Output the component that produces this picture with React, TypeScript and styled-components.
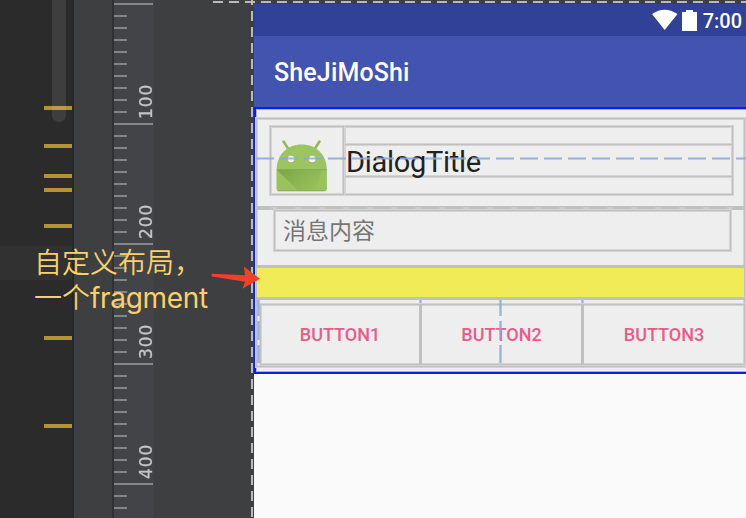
import React from "react";
import styled, { createGlobalStyle, css } from "styled-components";

const LINE = "#c0c0c0";
const SOFT = "#d4d4d4";
const GUIDE = "#8aabd8";

const GlobalStyle = createGlobalStyle`
  html, body { margin: 0; padding: 0; }
  body { width: 746px; height: 518px; overflow: hidden; background: #3e3f41; }
  * { box-sizing: border-box; }
`;

const Screen = styled.main`
  position: relative;
  display: flex;
  width: 746px;
  height: 518px;
  overflow: hidden;
  background: #3e3f41;
  font-family: Roboto, "Noto Sans CJK SC", sans-serif;
`;

const CodeStrip = styled.div`
  position: relative;
  flex: none;
  width: 74px;
  background: #2b2b2b;
  border-right: 2px solid #272727;
`;

const CurrentLine = styled.div`
  position: absolute;
  top: 246px;
  left: 0;
  right: 0;
  height: 34px;
  background: #313131;
`;

const ChangeMark = styled.div<{ $top: number }>`
  position: absolute;
  left: 44px;
  top: ${(p) => p.$top}px;
  width: 28px;
  height: 4px;
  background: #b69136;
`;

const ScrollThumb = styled.div`
  position: absolute;
  left: 52px;
  top: 0;
  width: 14px;
  height: 122px;
  border-radius: 0 0 7px 7px;
  background: rgba(255, 255, 255, 0.09);
`;

const Gutter = styled.div`
  flex: none;
  width: 40px;
  background: #3e3f41;
  border-right: 2px solid #323233;
`;

const Ruler = styled.div`
  flex: none;
  display: flex;
  flex-direction: column;
  gap: 10px;
  width: 40px;
  padding-top: 3px;
  background: #434447;
`;

const Tick = styled.div<{ $major: boolean }>`
  position: relative;
  flex: none;
  width: ${(p) => (p.$major ? 39 : 13)}px;
  height: 2px;
  background: #848584;
`;

const TickLabel = styled.span`
  position: absolute;
  left: 22px;
  bottom: 6px;
  height: 36px;
  width: 20px;
  writing-mode: vertical-rl;
  transform: rotate(180deg);
  font: 17px/20px "DejaVu Sans", sans-serif;
  letter-spacing: 0.9px;
  color: #c4c4c4;
  -webkit-text-stroke: 0.3px #c4c4c4;
`;

const Canvas = styled.div`
  flex: none;
  width: 100px;
  background: #3e3f40;
`;

const dashes = (dir: string) =>
  css`repeating-linear-gradient(${dir}, #bababa 0 10px, transparent 10px 16px)`;

const TopDashes = styled.div`
  position: absolute;
  left: 213px;
  right: 0;
  top: 1px;
  height: 2px;
  background: ${dashes("to right")};
`;

const SideDashes = styled.div`
  position: absolute;
  left: 251px;
  top: -5px;
  bottom: 0;
  width: 2px;
  background: ${dashes("to bottom")};
`;

const Device = styled.section`
  flex: none;
  width: 492px;
  margin-top: 4px;
  background: #fafafa;
`;

const StatusBar = styled.header`
  display: flex;
  align-items: flex-start;
  justify-content: flex-end;
  height: 32px;
  padding-right: 4px;
  background: #314198;
  color: #fff;
`;

const StatusIcons = styled.svg`
  width: 46px;
  height: 22px;
  margin: 5px 5px 0 0;
`;

const Clock = styled.span`
  font-size: 20px;
  line-height: 35px;
  font-weight: 500;
`;

const AppBar = styled.div`
  display: flex;
  align-items: center;
  height: 71px;
  padding: 2px 0 0 20px;
  background: #4253b0;
  color: #fff;
  font-size: 25px;
  font-weight: 500;
  letter-spacing: 0.15px;
`;

const Dialog = styled.article`
  position: relative;
  width: 500px;
  height: 267px;
  padding-top: 9px;
  border: 2px solid #0a1ef0;
  box-shadow: inset 0 0 0 1px #a9aef2;
  background: #eeeeee;
`;

const frame = css`
  border: 1px solid ${LINE};
  box-shadow: 0 0 0 1px ${SOFT}, inset 0 0 0 1px ${SOFT};
`;

const Outline = styled.div`
  ${frame}
  width: 489px;
  height: 249px;
`;

const Header = styled.div`
  display: flex;
  height: 87px;
  padding: 7px 0 0 13px;
`;

const IconCell = styled.div`
  ${frame}
  width: 75px;
  height: 69px;
  border-right-width: 2px;
`;

const TitleCell = styled.div`
  ${frame}
  width: 388px;
  height: 69px;
  padding-top: 17px;
  border-left: 0;
`;

const Title = styled.div`
  width: 387px;
  height: 33px;
  padding-left: 1px;
  border-top: 1px solid ${LINE};
  border-bottom: 1px solid ${LINE};
  box-shadow: 0 1px ${SOFT}, 0 -1px ${SOFT}, inset 0 1px ${SOFT}, inset 0 -1px ${SOFT};
  font-size: 29px;
  line-height: 35px;
  letter-spacing: -0.3px;
  color: #212121;
`;

const Divider = styled.div<{ $size: number }>`
  height: ${(p) => p.$size}px;
  background: ${LINE};
`;

const MessageArea = styled.div`
  height: 55px;
  padding-left: 17px;
`;

const Message = styled.div`
  ${frame}
  width: 457px;
  height: 41px;
  padding-left: 8px;
  font: 23px/37px "Noto Sans CJK SC", sans-serif;
  color: #757575;
`;

const FragmentSlot = styled.div`
  height: 29px;
  background: #f0eb56;
`;

const ButtonRow = styled.div`
  ${frame}
  display: flex;
  width: 485px;
  height: 61px;
  margin: 4px 0 0 3px;
`;

const DialogButton = styled.button<{ $width: number; $last?: boolean }>`
  flex: none;
  width: ${(p) => p.$width}px;
  height: 59px;
  padding: 0;
  border: 0;
  border-right: ${(p) => (p.$last ? 0 : 3)}px solid ${LINE};
  background: none;
  color: #ec5a8a;
  font: 500 18px/59px Roboto, sans-serif;
`;

const CenterGuide = styled.div`
  position: absolute;
  left: 0;
  top: 48px;
  width: 490px;
  height: 3px;
  opacity: 0.85;
  background: linear-gradient(rgba(138, 171, 216, 0), ${GUIDE} 30% 70%, rgba(138, 171, 216, 0));
  mask: repeating-linear-gradient(to right, #000 0 18px, transparent 18px 24px);
`;

const ColumnGuide = styled.div<{ $left: number; $height?: number }>`
  position: absolute;
  left: ${(p) => p.$left}px;
  top: 191px;
  width: 3px;
  height: ${(p) => p.$height ?? 63}px;
  opacity: 0.85;
  background: linear-gradient(to right, rgba(138, 171, 216, 0.3), ${GUIDE} 30% 70%, rgba(138, 171, 216, 0.3));
  mask: repeating-linear-gradient(to bottom, #000 0 16px, transparent 16px 21px, #000 21px 24px);
`;

const DividerDashes = styled.div`
  position: absolute;
  left: 15px;
  top: 98px;
  width: 474px;
  height: 2px;
  background: repeating-linear-gradient(to right, #cccbc9 0 6px, transparent 6px 24px);
`;

const RobotIcon = styled.svg`
  display: block;
  width: 52px;
  height: 54px;
  margin: 12px 0 0 5px;
`;

const Note = styled.p`
  position: absolute;
  left: 34px;
  top: 246px;
  margin: 0;
  font: 350 28px/35px Roboto, "Noto Sans CJK SC", sans-serif;
  color: #fad06a;
  white-space: nowrap;
`;

const Latin = styled.span`
  font: 400 28px/35px Inter, sans-serif;
  letter-spacing: -0.3px;
`;

const Arrow = styled.svg`
  position: absolute;
  left: 210px;
  top: 264px;
  width: 52px;
  height: 28px;
`;

const CHANGE_MARKS = [106, 144, 174, 188, 224, 336, 424];
const TICKS = Array.from({ length: 43 }, (_, i) => i);

function Robot() {
  return (
    <RobotIcon viewBox="276 139 52 54">
      <defs>
        <linearGradient id="fold" x1="0" y1="0" x2="1" y2="0.6">
          <stop offset="0" stopColor="#7da546" />
          <stop offset="1" stopColor="#97c05c" />
        </linearGradient>
      </defs>
      <path d="M283.500 141.500l5.500 8.500M319.500 141.500l-5.500 8.500" stroke="#92ba5b" strokeWidth="2.6" strokeLinecap="round" />
      <path d="M276.700 170v-1c0-14 10.500-24.500 25-24.500s25 10.500 25 24.500v20q0 2-2 2h-46q-2 0-2-2z" fill="#9cc562" />
      <path d="M276.700 169.500h50v19.500q0 2-2 2h-46q-2 0-2-2z" fill="#99c25e" />
      <path d="M277 170l21 20.500h18l6-20.500z" fill="url(#fold)" />
      <path d="M276.700 169.600h50" stroke="#84ac52" />
      <path d="M278 190.800h47.400" stroke="#86ae54" />
      <circle cx="291" cy="159" r="3.200" fill="#fff" />
      <circle cx="312.200" cy="159" r="3.200" fill="#fff" />
    </RobotIcon>
  );
}

export default function App() {
  return (
    <Screen>
      <GlobalStyle />
      <CodeStrip>
        <CurrentLine />
        {CHANGE_MARKS.map((top) => (
          <ChangeMark key={top} $top={top} />
        ))}
        <ScrollThumb />
      </CodeStrip>
      <Gutter />
      <Ruler>
        {TICKS.map((i) => (
          <Tick key={i} $major={i % 10 === 0}>
            {i > 0 && i % 10 === 0 && <TickLabel>{i * 10}</TickLabel>}
          </Tick>
        ))}
      </Ruler>
      <Canvas />
      <Device>
        <StatusBar>
          <StatusIcons viewBox="650 9 46 22">
            <path d="M650 14q12.500-8.500 25.500 0L662.700 30z" fill="#fff" />
            <path d="M684 10h7v2h4v19h-15V12h4z" fill="#fff" />
          </StatusIcons>
          <Clock>7:00</Clock>
        </StatusBar>
        <AppBar>SheJiMoShi</AppBar>
        <Dialog>
          <Outline>
            <Header>
              <IconCell>
                <Robot />
              </IconCell>
              <TitleCell>
                <Title>DialogTitle</Title>
              </TitleCell>
            </Header>
            <Divider $size={4} />
            <MessageArea>
              <Message>消息内容</Message>
            </MessageArea>
            <Divider $size={3} />
            <FragmentSlot />
            <Divider $size={3} />
            <ButtonRow>
              <DialogButton $width={161}>BUTTON1</DialogButton>
              <DialogButton $width={162}>BUTTON2</DialogButton>
              <DialogButton $width={160} $last>
                BUTTON3
              </DialogButton>
            </ButtonRow>
          </Outline>
          <CenterGuide />
          <DividerDashes />
          <ColumnGuide $left={1} />
          <ColumnGuide $left={163} $height={3} />
          <ColumnGuide $left={243} />
          <ColumnGuide $left={325} $height={3} />
        </Dialog>
      </Device>
      <TopDashes />
      <SideDashes />
      <Note>
        自定义布局，
        <br />
        一个<Latin>fragment</Latin>
      </Note>
      <Arrow viewBox="210 264 52 28">
        <path d="M212 273.800l33 1.400-1.200-8.600L260 278.800l-17.500 10 2.500-7-33-5.200q-1.200-1.500 0-2.800z" fill="#f04127" />
      </Arrow>
    </Screen>
  );
}
